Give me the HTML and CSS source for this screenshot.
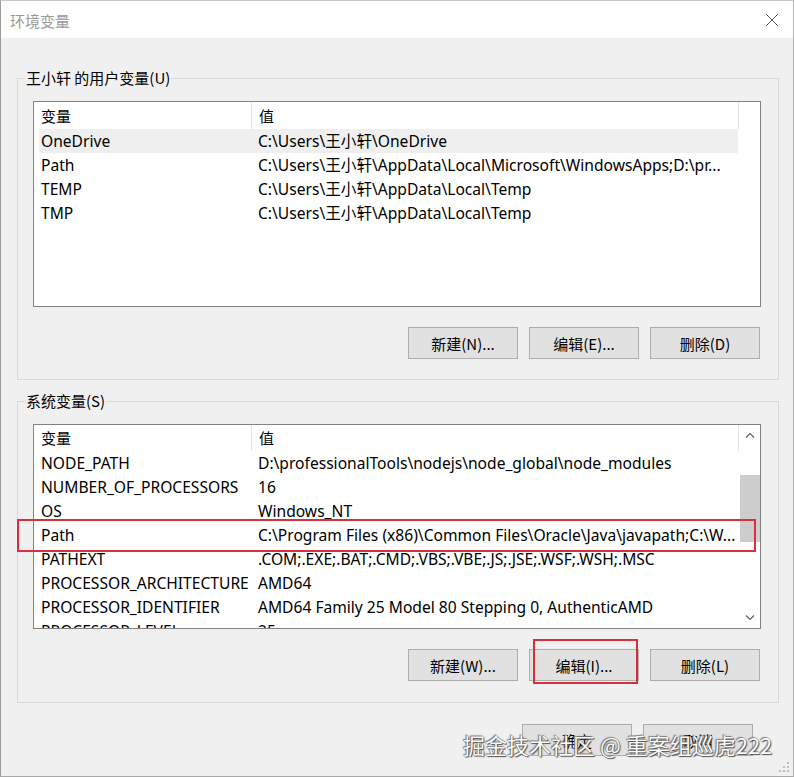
FILE: index.html
```html
<!DOCTYPE html>
<html lang="zh-CN">
<head>
<meta charset="utf-8">
<title>环境变量</title>
<link rel="stylesheet" href="styles.css">
</head>
<body>
<div class="window">
  <div class="titlebar">
    <span class="title">环境变量</span>
    <svg class="close" width="14" height="14" viewBox="0 0 14 14"><path d="M1 1L13 13M13 1L1 13" stroke="#5a5a5a" stroke-width="1" fill="none"/></svg>
  </div>
  <div class="content">
    <fieldset class="group">
      <legend>王小轩 的用户变量(U)</legend>
      <div class="list user-list">
        <div class="table">
          <div class="head"><span class="h1">变量</span><span class="h2">值</span></div>
          <div class="row selected"><span class="c1">OneDrive</span><span class="c2">C:\Users\王小轩\OneDrive</span></div>
          <div class="row"><span class="c1">Path</span><span class="c2">C:\Users\王小轩\AppData\Local\Microsoft\WindowsApps;D:\pr...</span></div>
          <div class="row"><span class="c1">TEMP</span><span class="c2">C:\Users\王小轩\AppData\Local\Temp</span></div>
          <div class="row"><span class="c1">TMP</span><span class="c2">C:\Users\王小轩\AppData\Local\Temp</span></div>
        </div>
      </div>
      <div class="buttons">
        <button class="btn">新建(N)...</button>
        <button class="btn">编辑(E)...</button>
        <button class="btn">删除(D)</button>
      </div>
    </fieldset>
    <fieldset class="group sys">
      <legend>系统变量(S)</legend>
      <div class="list sys-list">
        <div class="table">
          <div class="head"><span class="h1">变量</span><span class="h2">值</span></div>
          <div class="row"><span class="c1">NODE_PATH</span><span class="c2">D:\professionalTools\nodejs\node_global\node_modules</span></div>
          <div class="row"><span class="c1">NUMBER_OF_PROCESSORS</span><span class="c2">16</span></div>
          <div class="row"><span class="c1">OS</span><span class="c2">Windows_NT</span></div>
          <div class="row"><span class="c1">Path</span><span class="c2">C:\Program Files (x86)\Common Files\Oracle\Java\javapath;C:\W...</span></div>
          <div class="row"><span class="c1">PATHEXT</span><span class="c2">.COM;.EXE;.BAT;.CMD;.VBS;.VBE;.JS;.JSE;.WSF;.WSH;.MSC</span></div>
          <div class="row"><span class="c1">PROCESSOR_ARCHITECTURE</span><span class="c2">AMD64</span></div>
          <div class="row"><span class="c1">PROCESSOR_IDENTIFIER</span><span class="c2">AMD64 Family 25 Model 80 Stepping 0, AuthenticAMD</span></div>
          <div class="row"><span class="c1">PROCESSOR_LEVEL</span><span class="c2">25</span></div>
        </div>
        <div class="scrollbar">
          <div class="arrow"><svg width="10" height="6" viewBox="0 0 10 6"><path d="M1 5.5L5 1.5L9 5.5" stroke="#606060" stroke-width="1.2" fill="none"/></svg></div>
          <div class="track"><div class="thumb"></div></div>
          <div class="arrow"><svg width="10" height="6" viewBox="0 0 10 6"><path d="M1 0.5L5 4.5L9 0.5" stroke="#606060" stroke-width="1.2" fill="none"/></svg></div>
        </div>
      </div>
      <div class="buttons">
        <button class="btn">新建(W)...</button>
        <button class="btn">编辑(I)...</button>
        <button class="btn">删除(L)</button>
      </div>
    </fieldset>
    <div class="buttons dialog-buttons">
      <button class="btn">确定</button>
      <button class="btn">取消</button>
    </div>
  </div>
  <div class="mark mark-path"></div>
  <div class="mark mark-edit"></div>
  <div class="watermark">掘金技术社区 @ 重案组巡虎222</div>
  <svg class="grip" width="12" height="12" viewBox="0 0 12 12">
    <rect x="9" y="1" width="2" height="2" fill="#bdbdbd"/>
    <rect x="5" y="5" width="2" height="2" fill="#bdbdbd"/>
    <rect x="9" y="5" width="2" height="2" fill="#bdbdbd"/>
    <rect x="1" y="9" width="2" height="2" fill="#bdbdbd"/>
    <rect x="5" y="9" width="2" height="2" fill="#bdbdbd"/>
    <rect x="9" y="9" width="2" height="2" fill="#bdbdbd"/>
  </svg>
</div>
</body>
</html>
```

FILE: styles.css
```css
* { box-sizing: border-box; }
html, body { margin: 0; padding: 0; }
body {
  font-family: "Noto Sans", "Noto Sans CJK SC", sans-serif;
  font-size: 15px;
  color: #000;
  background: #fff;
}
.window {
  position: relative;
  width: 794px;
  height: 777px;
  background: #f0f0f0;
  border-top: 1px solid #c8c8c8;
  border-left: 1px solid #9c9c9c;
  border-right: 1px solid #b4b4b4;
  border-bottom: 1px solid #a8a8a8;
  overflow: hidden;
}
.titlebar {
  height: 37px;
  background: #fff;
  display: flex;
  align-items: center;
  justify-content: space-between;
  padding: 1px 14px 0 9px;
}
.title {
  color: #9a9a9a;
  font-family: "Noto Sans CJK SC", sans-serif;
  font-size: 15px;
}
.close { display: block; }
.content {
  padding: 30px 14px 0 16px;
}
.group {
  margin: 0;
  border: 1px solid #d9d9d9;
  padding: 13px 17px 20px 15px;
  min-width: 0;
}
.group.sys {
  margin-top: 11px;
  padding-bottom: 21px;
}
.group legend {
  padding: 0 1px;
  margin-left: -8px;
  line-height: 20px;
  font-family: "Noto Sans CJK SC", "Noto Sans", sans-serif;
}
.list {
  background: #fff;
  border: 1px solid #828282;
  display: flex;
}
.user-list { height: 206px; }
.sys-list { height: 205px; overflow: hidden; }
.table {
  flex: 1;
  min-width: 0;
}
.head {
  display: flex;
  height: 27px;
  line-height: 27px;
  width: 705px;
}
.head .h1 {
  width: 218px;
  padding-left: 7px;
  border-right: 1px solid #e5e5e5;
}
.head .h2 {
  width: 487px;
  padding-left: 7px;
  border-right: 1px solid #e5e5e5;
}
.head span { font-family: "Noto Sans CJK SC", sans-serif; }
.sys-list .head { height: 26px; line-height: 26px; }
.row {
  display: flex;
  height: 24px;
  line-height: 24px;
  margin-left: 5px;
  width: 699px;
  white-space: nowrap;
  font-size: 15.6px;
}
.row.selected { background: #efefef; }
.row .c1 { width: 212px; padding-left: 2px; }
.row .c2 { padding-left: 7px; }
.scrollbar {
  width: 20px;
  display: flex;
  flex-direction: column;
}
.arrow {
  height: 20px;
  display: flex;
  align-items: center;
  justify-content: center;
}
.track { flex: 1; }
.thumb {
  margin-top: 30px;
  height: 67px;
  background: #cdcdcd;
}
.buttons {
  display: flex;
  justify-content: flex-end;
  gap: 11px;
  margin-top: 20px;
  margin-right: 1px;
}
.btn {
  width: 110px;
  height: 32px;
  background: #e1e1e1;
  border: 1px solid #adadad;
  font-family: "Noto Sans CJK SC", "Noto Sans", sans-serif;
  font-size: 15px;
  color: #000;
  padding: 0;
}
.dialog-buttons {
  margin-top: 21px;
  margin-right: 26px;
}
.mark {
  position: absolute;
  border: 2px solid #d7303b;
}
.mark-path {
  left: 16px;
  top: 518px;
  width: 739px;
  height: 33px;
}
.mark-edit {
  left: 532px;
  top: 638px;
  width: 105px;
  height: 45px;
}
.watermark {
  position: absolute;
  left: 462px;
  top: 729px;
  font-family: "Noto Sans CJK SC", sans-serif;
  font-size: 22px;
  line-height: 28px;
  color: #fbfbfb;
  text-shadow: 0 0 1px #444, 1px 1px 1px #555, -1px -1px 1px #888;
  white-space: nowrap;
}
.grip {
  position: absolute;
  right: 3px;
  bottom: 3px;
}
```
